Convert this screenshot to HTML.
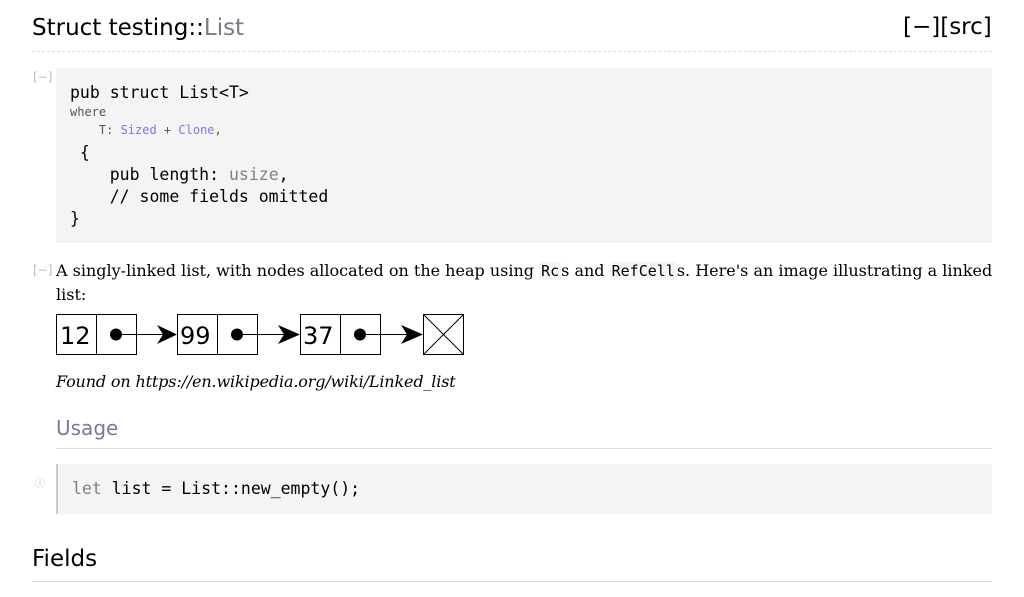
<!DOCTYPE html>
<html><head><meta charset="utf-8"><style>
body{margin:0;background:#fff;color:#000;width:1024px;height:597px;overflow:hidden;position:relative;font-family:"DejaVu Serif",serif}
.a{position:absolute;white-space:pre}
.sans{font-family:"DejaVu Sans",sans-serif}
.mono{font-family:"DejaVu Sans Mono",monospace}
.tg{color:#bbb;font-size:12px;font-family:"DejaVu Sans",sans-serif}
code{font-family:"DejaVu Sans Mono",monospace;font-size:15px;background:#f5f5f5;padding:0 2px}
</style></head><body>
<div class="a sans" style="left:32px;top:15px;font-size:23px">Struct testing::<span style="color:#7a7a85">List</span></div>
<div class="a sans" style="left:903px;top:14px;font-size:23px">[−][src]</div>
<div style="position:absolute;left:32px;top:51px;width:960px;border-top:1px dashed #ddd"></div>
<div class="a tg" style="left:33px;top:70px">[−]</div>
<div style="position:absolute;left:56px;top:68px;width:936px;height:175px;background:#f4f4f4"></div>
<div class="a mono" style="left:70px;top:82px;font-size:16.5px;line-height:22px">pub struct List&lt;T&gt;</div>
<div class="a mono" style="left:70px;top:105px;font-size:12px;color:#555">where</div>
<div class="a mono" style="left:70px;top:123px;font-size:12px;color:#555">    T: <span style="color:#8a70e0">Sized</span> + <span style="color:#8a70e0">Clone</span>,</div>
<div class="a mono" style="left:70px;top:142px;font-size:16.5px;line-height:22px"> {
    pub length: <span style="color:#808080">usize</span>,
    // some fields omitted
}</div>
<div class="a tg" style="left:33px;top:263px">[−]</div>
<div style="position:absolute;left:56px;top:259px;width:940px;font-size:16px;line-height:23px">A singly-linked list, with nodes allocated on the heap using <code>Rc</code>s and <code>RefCell</code>s. Here's an image illustrating a linked list:</div>
<svg style="position:absolute;left:56px;top:314px" width="410" height="42">
<g fill="none" stroke="#000" stroke-width="1">
<rect x="0.5" y="0.5" width="80" height="40"/><line x1="40.5" y1="0" x2="40.5" y2="41"/>
<rect x="121.5" y="0.5" width="80" height="40"/><line x1="161.5" y1="0" x2="161.5" y2="41"/>
<rect x="244.5" y="0.5" width="80" height="40"/><line x1="284.5" y1="0" x2="284.5" y2="41"/>
<rect x="367.5" y="0.5" width="40" height="40"/><line x1="368" y1="1" x2="407" y2="40"/><line x1="407" y1="1" x2="368" y2="40"/>
<line x1="60" y1="20.5" x2="110" y2="20.5"/><line x1="181" y1="20.5" x2="232" y2="20.5"/><line x1="304" y1="20.5" x2="355" y2="20.5"/>
</g>
<g fill="#000"><circle cx="60" cy="20.5" r="6"/><circle cx="181" cy="20.5" r="6"/><circle cx="304" cy="20.5" r="6"/>
<path d="M101 11L121 20.5L101 30L107 20.5Z"/><path d="M222 11L244 20.5L222 30L228 20.5Z"/><path d="M345 11L367 20.5L345 30L351 20.5Z"/></g>
<g font-family="DejaVu Sans" font-size="24"><text x="4" y="30">12</text><text x="124" y="30">99</text><text x="247" y="30">37</text></g>
</svg>
<div class="a" style="left:56px;top:372px;font-size:16px;font-style:italic;letter-spacing:-0.15px">Found on https://en.wikipedia.org/wiki/Linked_list</div>
<div class="a sans" style="left:56px;top:416px;font-size:20px;color:#7a77a0">Usage</div>
<div style="position:absolute;left:56px;top:448px;width:936px;border-top:1px solid #ddd"></div>
<div class="a tg" style="left:35px;top:475px;font-size:10px;color:#bbb">ⓘ</div>
<div style="position:absolute;left:56px;top:464px;width:936px;height:50px;background:#f4f4f4;border-left:2px solid #ccc;box-sizing:border-box"></div>
<div class="a mono" style="left:72px;top:479px;font-size:16.5px"><span style="color:#808080">let</span> list = List::new_empty();</div>
<div class="a sans" style="left:32px;top:546px;font-size:23px">Fields</div>
<div style="position:absolute;left:32px;top:581px;width:960px;border-top:1px solid #ddd"></div>
</body></html>
